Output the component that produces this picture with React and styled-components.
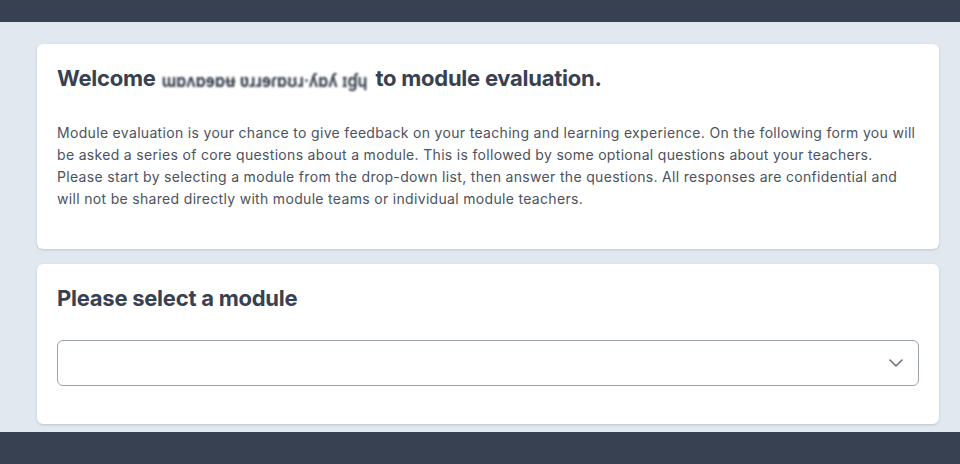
import React from "react";
import styled, { createGlobalStyle } from "styled-components";

const Global = createGlobalStyle`
  html, body { margin: 0; padding: 0; }
  body {
    background: #e2e8f0;
    font-family: Inter, "Noto Sans", "Liberation Sans", sans-serif;
    color: #374151;
    -webkit-font-smoothing: antialiased;
  }
`;

const Page = styled.div`
  min-height: 464px;
  display: flex;
  flex-direction: column;
`;

const TopBar = styled.header`
  height: 22px;
  background: #374151;
  flex: none;
`;

const Main = styled.main`
  flex: 1;
  display: flex;
  flex-direction: column;
  gap: 15px;
  padding: 22px 21px 8px 37px;
`;

const Card = styled.section`
  background: #ffffff;
  border-radius: 6px;
  box-shadow: 0 1px 3px rgba(15, 23, 42, 0.12), 0 1px 2px rgba(15, 23, 42, 0.06);
  padding: ${(p) => p.$pad || "20px"};
`;

const Title = styled.h2`
  margin: 0;
  font-size: 22px;
  line-height: 28px;
  font-weight: 700;
  color: #374151;
  letter-spacing: -0.25px;
`;

const Blurred = styled.span`
  display: inline-block;
  font-weight: 600;
  font-size: 16px;
  color: #1f2937;
  filter: blur(0.8px);
  letter-spacing: 0.1px;
  transform: scaleY(1.15);
  margin: 0 3px 0 1px;
`;

const Body = styled.p`
  margin: 28px 0 0;
  font-size: 14px;
  line-height: 22px;
  letter-spacing: 0.32px;
  color: #4b5260;
`;

const SelectWrap = styled.div`
  margin-top: 28px;
  height: 46px;
  border: 1px solid #9ca3af;
  border-radius: 6px;
  box-sizing: border-box;
  display: flex;
  align-items: center;
  justify-content: flex-end;
  padding-right: 15px;
  background: #fff;
`;

const Chevron = styled.svg`
  width: 14px;
  height: 8px;
  color: #6b7280;
`;

const Footer = styled.footer`
  height: 32px;
  background: #374151;
  flex: none;
`;

export default function App() {
  return (
    <>
      <Global />
      <Page>
        <TopBar />
        <Main>
          <Card $pad="20px 20px 39px">
            <Title>
              Welcome <Blurred>ɯɒʌɒɘɒʉ ʋɹɹɘɾɒʊɹ·ʎɒʎ ɪɠɥ</Blurred> to module evaluation.
            </Title>
            <Body>
              Module evaluation is your chance to give feedback on your teaching and learning
              experience. On the following form you will be asked a series of core questions about
              a module. This is followed by some optional questions about your teachers. Please
              start by selecting a module from the drop-down list, then answer the questions. All
              responses are confidential and will not be shared directly with module teams or
              individual module teachers.
            </Body>
          </Card>
          <Card $pad="20px 20px 38px">
            <Title>Please select a module</Title>
            <SelectWrap>
              <Chevron viewBox="0 0 14 8" fill="none">
                <path d="M1 1l6 6 6-6" stroke="currentColor" strokeWidth="1.6" strokeLinecap="round" strokeLinejoin="round" />
              </Chevron>
            </SelectWrap>
          </Card>
        </Main>
        <Footer />
      </Page>
    </>
  );
}
